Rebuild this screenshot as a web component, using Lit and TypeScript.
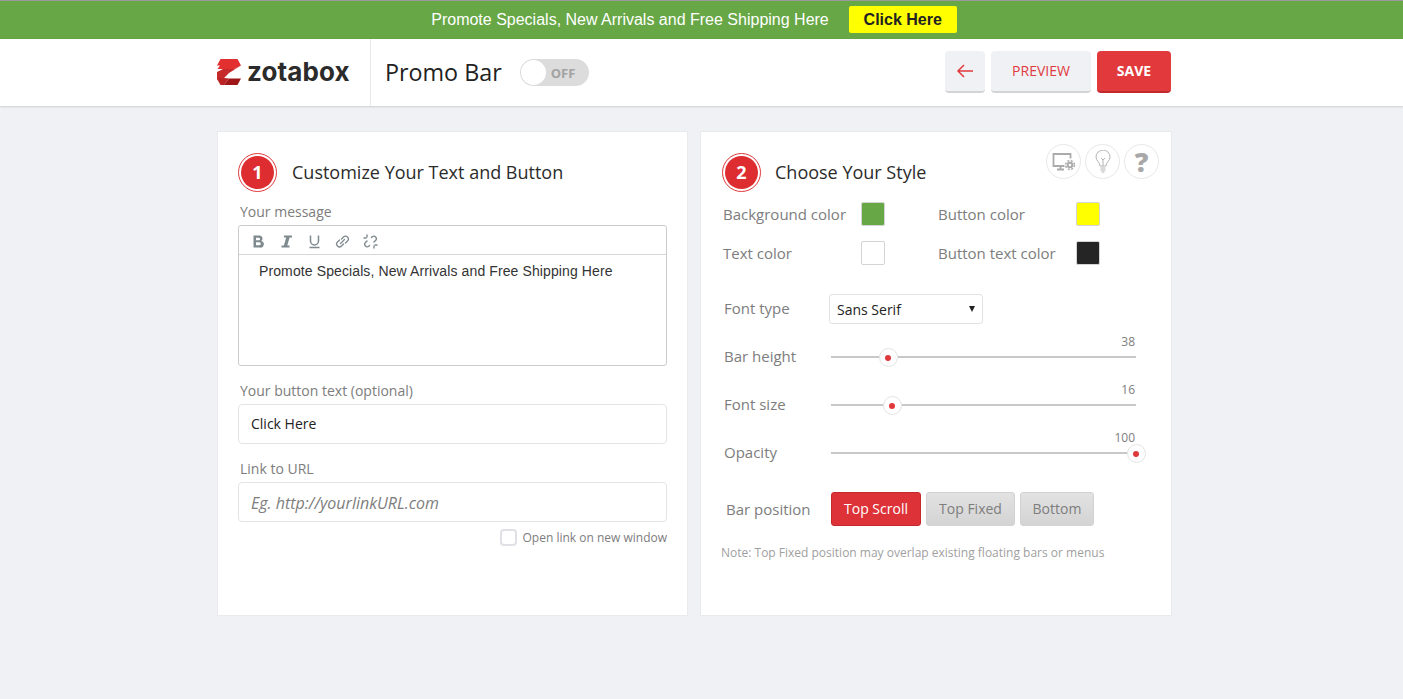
import { LitElement, css, html, svg } from "lit";
import { customElement, property } from "lit/decorators.js";

// one labelled slider row of the style panel
@customElement("range-row")
export class RangeRow extends LitElement {
  @property() label = "";
  @property() value = "";
  @property({ type: Number }) pos = 0;

  static styles = css`
    :host {
      display: flex;
      align-items: center;
      height: 48px;
      font-family: "Open Sans", sans-serif;
    }
    .label {
      width: 107px;
      padding-bottom: 2px;
      font-size: 15px;
      color: #7d7d7d;
    }
    .track {
      position: relative;
      width: 305px;
      height: 2px;
      background: #c8c8c8;
    }
    .value {
      position: absolute;
      right: 1px;
      top: -22px;
      font-size: 12px;
      line-height: 16px;
      color: #7d7d7d;
    }
    .thumb {
      position: absolute;
      top: -8px;
      width: 17px;
      height: 17px;
      margin-left: -9.5px;
      border: 1px solid #e4e4e4;
      border-radius: 50%;
      background: #fff;
      display: flex;
      align-items: center;
      justify-content: center;
    }
    .thumb i {
      width: 6px;
      height: 6px;
      border-radius: 50%;
      background: #e0383b;
    }
  `;

  render() {
    return html`
      <span class="label">${this.label}</span>
      <div class="track">
        <span class="value">${this.value}</span>
        <span class="thumb" style="left:${this.pos}px"><i></i></span>
      </div>
    `;
  }
}

const iconBold = svg`<path d="M2.500 1.500h5.500a3 3 0 0 1 2.200 5.400A3.300 3.300 0 0 1 8.700 13.500H2.500zM5 3.700v2.500h2.800a1.250 1.250 0 0 0 0-2.500zM5 8.300v3h3.300a1.500 1.500 0 0 0 0-3z" fill="#7f8a8e" fill-rule="evenodd"/>`;
const iconItalic = svg`<path d="M5 1.500h8v2H10.600L8.300 11.500h2.200v2H2.500v-2h2.400L7.200 3.500H5z" fill="#7f8a8e"/>`;
const iconUnderline = svg`<path d="M3.500 1.500v5.500a4 4 0 0 0 8 0V1.500M2.500 13.500h10" fill="none" stroke="#7f8a8e" stroke-width="1.500"/>`;
const iconLink = svg`<g fill="none" stroke="#7f8a8e" stroke-width="1.300" stroke-linecap="round"><path d="M5.500 9.500l4-4"/><path d="M6.500 5l2-2a2.800 2.800 0 0 1 4 4l-2 2"/><path d="M8.500 10l-2 2a2.800 2.800 0 0 1-4-4l2-2"/></g>`;
const iconUnlink = svg`<g fill="none" stroke="#7f8a8e" stroke-width="1.400" stroke-linecap="round"><path d="M8.500 3.500l.8-.8a2.500 2.500 0 0 1 3.500 3.500l-1.800 1.800"/><path d="M6.500 11.500l-.8.8a2.500 2.500 0 0 1-3.500-3.500l1.800-1.800"/><path d="M4 1v2M1 4h2M11 14v-2M14 11h-2"/></g>`;

@customElement("app-root")
export class AppRoot extends LitElement {
  static styles = css`
    :host {
      display: block;
      min-height: 699px;
      background: #f0f1f5;
      font-family: "Open Sans", sans-serif;
      color: #7d7d7d;
    }
    * {
      box-sizing: border-box;
    }
    .promo {
      height: 39px;
      border-top: 1px solid #9a9a9a;
      background: #67a746;
      display: flex;
      align-items: center;
      justify-content: center;
      gap: 20px;
      padding: 0 15px 1px 0;
      font-family: "Liberation Sans", Arial, sans-serif;
      font-size: 16px;
      color: #fff;
    }
    .promo a {
      width: 108px;
      height: 27px;
      border-radius: 2px;
      background: #ff0;
      color: #222;
      font-weight: 700;
      display: flex;
      align-items: center;
      justify-content: center;
    }
    header {
      height: 67px;
      background: #fff;
      box-shadow: 0 1px 2px rgba(0, 0, 0, 0.14);
    }
    .head-in {
      width: 954px;
      height: 100%;
      margin-left: 217px;
      display: flex;
      align-items: center;
    }
    .logo {
      width: 154px;
      height: 100%;
      border-right: 1px solid #e8e8e8;
      display: flex;
      align-items: center;
      gap: 6px;
      padding-bottom: 2px;
    }
    .logo svg {
      flex: none;
    }
    .logo span {
      font-family: "Inter", sans-serif;
      font-weight: 700;
      font-size: 26px;
      letter-spacing: 0.1px;
      color: #2b2b2b;
    }
    .title {
      margin: 0 0 2px 14px;
      font-size: 23.3px;
      color: #222;
    }
    .toggle {
      margin-left: 18px;
      width: 69px;
      height: 27px;
      border-radius: 14px;
      background: #dcdcdc;
      display: flex;
      align-items: center;
      gap: 5px;
      padding-left: 1px;
      font-size: 13px;
      font-weight: 700;
      color: #a2a2a2;
    }
    .toggle i {
      width: 25px;
      height: 25px;
      border-radius: 50%;
      background: #fff;
    }
    .actions {
      margin: 0 0 2px auto;
      display: flex;
      gap: 6px;
    }
    .btn {
      height: 42px;
      border-radius: 4px;
      border-bottom: 2px solid #d4d4d6;
      background: #f0f1f5;
      color: #e0393e;
      font-size: 14px;
      display: flex;
      align-items: center;
      justify-content: center;
    }
    .btn.back {
      width: 40px;
    }
    .btn.preview {
      width: 100px;
    }
    .btn.save {
      width: 74px;
      background: #e23a3c;
      border-bottom-color: #c02a2d;
      color: #fff;
      font-weight: 700;
    }
    main {
      width: 955px;
      margin: 25px 0 0 217px;
      display: flex;
      gap: 12px;
    }
    .card {
      position: relative;
      height: 485px;
      background: #fff;
      border: 1px solid #e9eaee;
    }
    .card.one {
      width: 471px;
      padding: 20px 20px 0;
    }
    .card.two {
      width: 472px;
      padding: 20px 20px 0 21px;
    }
    .step {
      display: flex;
      align-items: center;
      gap: 14px;
      height: 40px;
      font-size: 18px;
      color: #2b2b2b;
    }
    .one .step {
      gap: 15px;
    }
    .num {
      width: 39px;
      height: 39px;
      flex: none;
      border-radius: 50%;
      border: 1px solid #e0383b;
      padding: 2px;
      background-clip: content-box;
      background-color: #de2d30;
      color: #fff;
      font-size: 18px;
      font-weight: 700;
      display: flex;
      align-items: center;
      justify-content: center;
    }
    .lbl {
      display: block;
      padding-left: 2px;
      font-size: 14px;
      line-height: 20px;
      color: #7d7d7d;
    }
    .editor {
      height: 141px;
      margin-top: 3px;
      border: 1px solid #ccc;
      border-radius: 3px;
    }
    .tools {
      height: 29px;
      padding: 2px 0 0 12px;
      border-bottom: 1px solid #d6d6d6;
      display: flex;
      align-items: center;
      gap: 13px;
    }
    .tools svg {
      width: 15px;
      height: 15px;
    }
    .msg {
      padding: 6px 20px;
      font-family: "Liberation Sans", Arial, sans-serif;
      font-size: 14px;
      letter-spacing: 0.11px;
      line-height: 20px;
      color: #333;
    }
    .field {
      height: 40px;
      margin-top: 3px;
      padding: 0 0 2px 12px;
      border: 1px solid #e4e4e8;
      border-radius: 4px;
      display: flex;
      align-items: center;
      font-size: 14px;
      color: #222;
    }
    .field.url {
      padding: 1px 0 0 12px;
      font-size: 16px;
      font-style: italic;
      color: #7d7d7d;
    }
    .check {
      margin-top: 7px;
      display: flex;
      justify-content: flex-end;
      align-items: center;
      gap: 6px;
      font-size: 12px;
      color: #7d7d7d;
    }
    .check i {
      width: 17px;
      height: 17px;
      border: 2px solid #e0e0e6;
      border-radius: 4px;
    }
    .help {
      position: absolute;
      top: 12px;
      right: 12px;
      display: flex;
      gap: 4px;
    }
    .help span {
      width: 35px;
      height: 35px;
      border: 1px solid #e8e8e8;
      border-radius: 50%;
      display: flex;
      align-items: center;
      justify-content: center;
      color: #a8a8a8;
      font-size: 27px;
      font-weight: 800;
    }
    .colors {
      margin-top: 10px;
      padding-left: 1px;
      display: grid;
      grid-template-columns: 138px 77px 138px 24px;
      row-gap: 15px;
      align-items: center;
      font-size: 15px;
    }
    .colors i {
      width: 24px;
      height: 24px;
      border: 1px solid #d4d4d4;
      border-radius: 2px;
    }
    .font {
      margin-top: 29px;
      padding-left: 2px;
      display: flex;
      align-items: center;
      font-size: 15px;
    }
    .font .name {
      width: 105px;
      margin-bottom: 3px;
    }
    .select {
      width: 154px;
      height: 30px;
      padding: 0 7px;
      border: 1px solid #e2e2e2;
      border-radius: 3px;
      display: flex;
      align-items: center;
      justify-content: space-between;
      font-size: 14px;
      color: #222;
    }
    .select i {
      width: 0;
      height: 0;
      border: 3.5px solid transparent;
      border-top: 6px solid #222;
      border-bottom: 0;
    }
    .ranges {
      margin-top: 9px;
      padding-left: 2px;
    }
    .position {
      margin-top: 15px;
      padding-left: 4px;
      display: flex;
      align-items: center;
      font-size: 15px;
    }
    .position .name {
      width: 105px;
    }
    .seg {
      height: 34px;
      margin-right: 5px;
      padding-bottom: 2px;
      border: 1px solid #d2d2d2;
      border-radius: 3px;
      background: linear-gradient(#e2e2e2, #d4d4d4);
      font-size: 14px;
      color: #7d7d7d;
      display: flex;
      align-items: center;
      justify-content: center;
    }
    .seg.on {
      border-color: #c42a2d;
      background: #dd3338;
      color: #fff;
    }
    .note {
      margin: 18px 0 0 -1px;
      font-size: 12px;
      color: #a0a0a0;
    }
  `;

  render() {
    return html`
      <div class="promo">
        <span>Promote Specials, New Arrivals and Free Shipping Here</span>
        <a>Click Here</a>
      </div>
      <header>
        <div class="head-in">
          <div class="logo">
            <svg width="24" height="26" viewBox="0 0 24 26">
              <path d="M3.500 0H20.500L24 6.500 17 10H0.500L3 6.500H0z" fill="#e22f30" />
              <path d="M24 6.500L12 14 7 19H0V13L6 10H17z" fill="#c62a2b" />
              <path d="M0 19H7L12 19.500 7 26H3.500L0 20z" fill="#bb2325" />
              <path d="M12 19.500H24L20.500 26H7z" fill="#9f1618" />
            </svg>
            <span>zotabox</span>
          </div>
          <div class="title">Promo Bar</div>
          <div class="toggle"><i></i>OFF</div>
          <div class="actions">
            <div class="btn back">
              <svg width="18" height="14" viewBox="0 0 18 14">
                <path d="M17 7H2M8 1L2 7l6 6" fill="none" stroke="#e0393e" stroke-width="1.500" />
              </svg>
            </div>
            <div class="btn preview">PREVIEW</div>
            <div class="btn save">SAVE</div>
          </div>
        </div>
      </header>
      <main>
        <section class="card one">
          <div class="step"><span class="num">1</span>Customize Your Text and Button</div>
          <label class="lbl" style="margin-top:10px">Your message</label>
          <div class="editor">
            <div class="tools">
              <svg viewBox="0 0 15 15">${iconBold}</svg>
              <svg viewBox="0 0 15 15">${iconItalic}</svg>
              <svg viewBox="0 0 15 15">${iconUnderline}</svg>
              <svg viewBox="0 0 15 15">${iconLink}</svg>
              <svg viewBox="0 0 15 15">${iconUnlink}</svg>
            </div>
            <div class="msg">Promote Specials, New Arrivals and Free Shipping Here</div>
          </div>
          <label class="lbl" style="margin-top:15px">Your button text (optional)</label>
          <div class="field">Click Here</div>
          <label class="lbl" style="margin-top:15px">Link to URL</label>
          <div class="field url">Eg. http://yourlinkURL.com</div>
          <div class="check"><i></i>Open link on new window</div>
        </section>
        <section class="card two">
          <div class="help">
            <span>
              <svg width="24" height="20" viewBox="0 0 24 20">
                <path d="M12.500 14H1.500V2h17v4.500M5 17.500h7M8.500 14v3" fill="none" stroke="#ababab" stroke-width="1.800" />
                <circle cx="18" cy="13" r="2.300" fill="none" stroke="#ababab" stroke-width="2" />
                <circle cx="18" cy="13" r="4.400" fill="none" stroke="#ababab" stroke-width="1.500" stroke-dasharray="2 1.500" />
              </svg>
            </span>
            <span>
              <svg width="16" height="24" viewBox="0 0 16 24">
                <path d="M5 16c0-4-4-5-4-9a7 7 0 0 1 14 0c0 4-4 5-4 9z" fill="none" stroke="#b4b4b4" />
                <path d="M6 8l2 2 2-2M8 10v6M5.500 18h5M5.500 20h5M6.500 22h3" fill="none" stroke="#b4b4b4" />
              </svg>
            </span>
            <span>?</span>
          </div>
          <div class="step"><span class="num">2</span>Choose Your Style</div>
          <div class="colors">
            <span>Background color</span><i style="background:#67a746"></i>
            <span>Button color</span><i style="background:#ff0"></i>
            <span>Text color</span><i style="background:#fff"></i>
            <span>Button text color</span><i style="background:#252525"></i>
          </div>
          <div class="font">
            <span class="name">Font type</span>
            <div class="select">Sans Serif<i></i></div>
          </div>
          <div class="ranges">
            <range-row label="Bar height" value="38" pos="57"></range-row>
            <range-row label="Font size" value="16" pos="61"></range-row>
            <range-row label="Opacity" value="100" pos="305"></range-row>
          </div>
          <div class="position">
            <span class="name">Bar position</span>
            <div class="seg on" style="width:90px">Top Scroll</div>
            <div class="seg" style="width:89px">Top Fixed</div>
            <div class="seg" style="width:74px">Bottom</div>
          </div>
          <div class="note">Note: Top Fixed position may overlap existing floating bars or menus</div>
        </section>
      </main>
    `;
  }
}
